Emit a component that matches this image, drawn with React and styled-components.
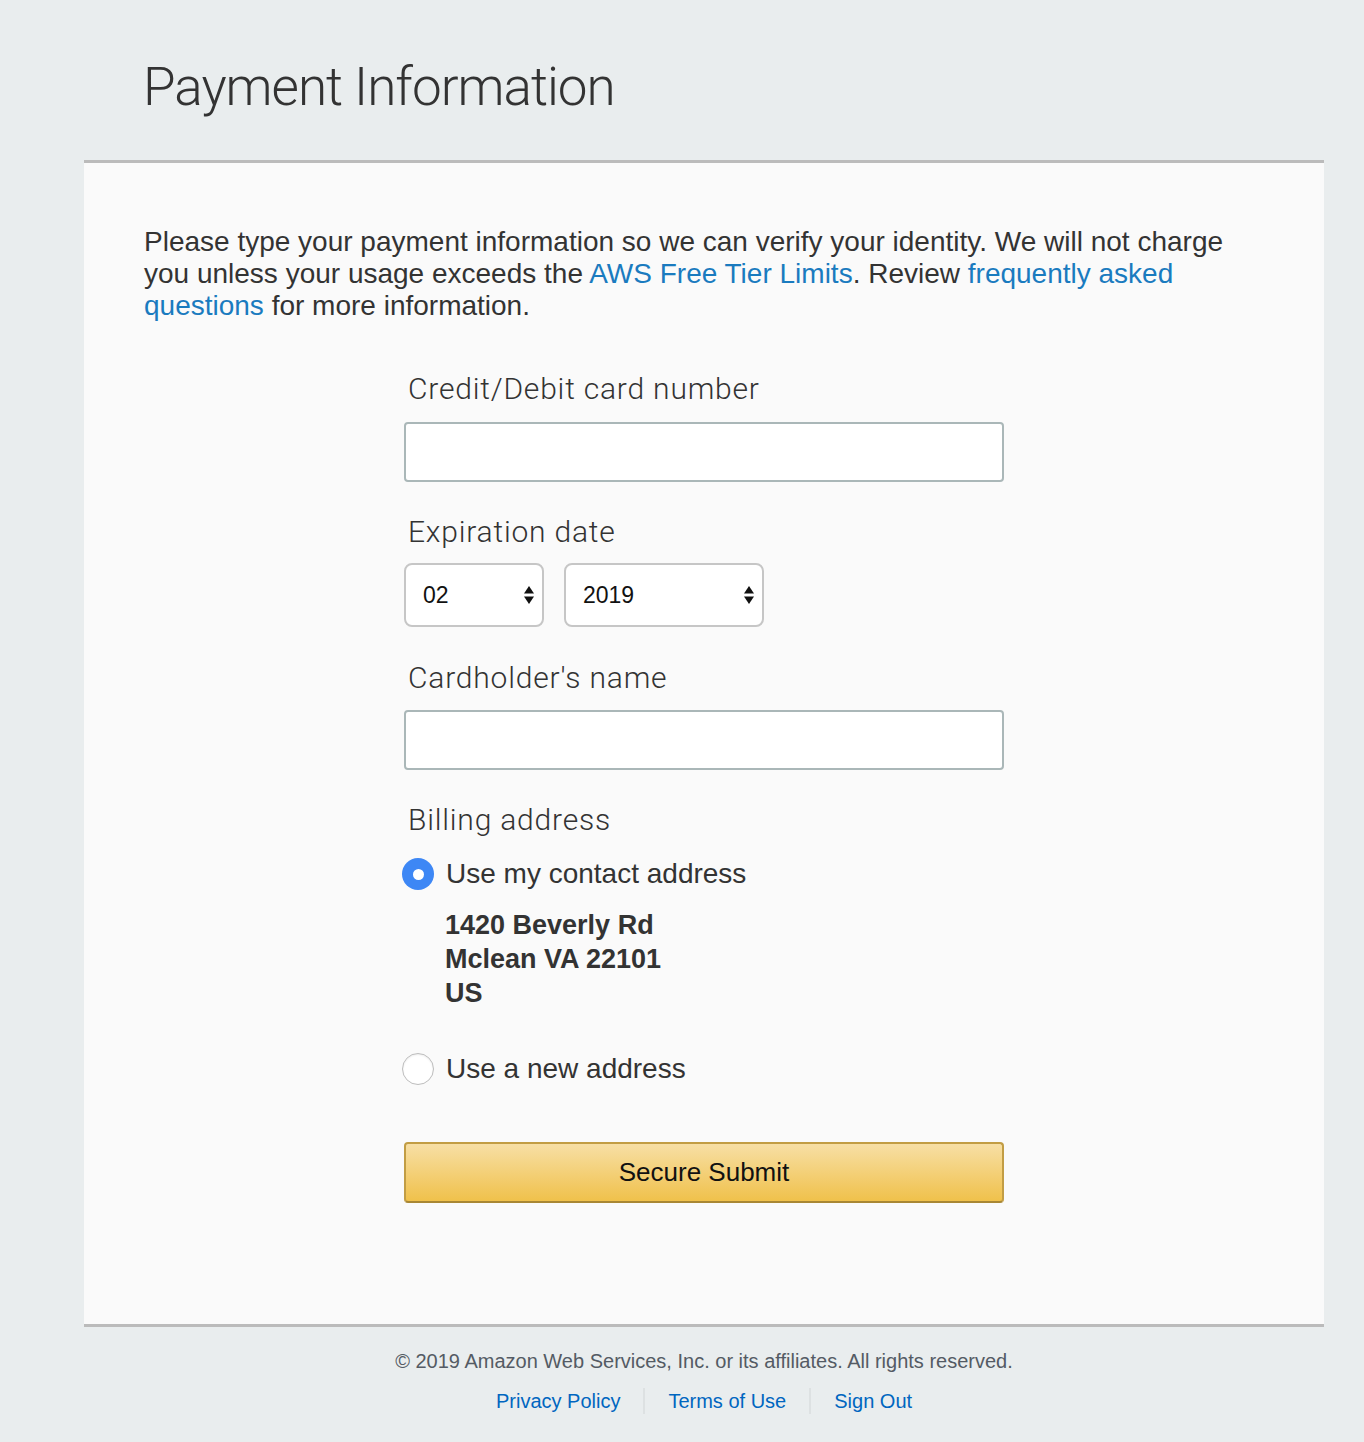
import React from 'react';
import styled, { createGlobalStyle } from 'styled-components';

const GlobalStyle = createGlobalStyle`
  html, body {
    margin: 0;
    padding: 0;
    background: #e9edee;
  }
  body {
    font-family: "Liberation Sans", Arial, sans-serif;
    color: #333;
  }
`;

const Page = styled.div`
  width: 1364px;
  min-height: 1442px;
  background: #e9edee;
`;

const Header = styled.header`
  height: 160px;
  padding-left: 143px;
  box-sizing: border-box;
  display: flex;
  align-items: center;
`;

const Title = styled.h1`
  margin: 14px 0 0 0;
  font-family: Roboto, "Liberation Sans", sans-serif;
  font-weight: 300;
  font-size: 53px;
  color: #333;
  letter-spacing: -1px;
`;

const Panel = styled.main`
  margin-left: 84px;
  width: 1240px;
  box-sizing: border-box;
  background: #fafafa;
  border-top: 3px solid #bbbbbb;
  border-bottom: 3px solid #bbbbbb;
  padding: 63px 60px 121px;
`;

const Intro = styled.p`
  margin: 0;
  font-size: 28px;
  line-height: 32px;
  color: #333;
`;

const Link = styled.a`
  color: #1a7bbf;
  text-decoration: none;
`;

const Form = styled.form`
  width: 600px;
  margin: 49px auto 0;
  display: flex;
  flex-direction: column;
`;

const Label = styled.label`
  display: block;
  font-family: Roboto, "Liberation Sans", sans-serif;
  font-weight: 300;
  font-size: 30px;
  letter-spacing: 0.8px;
  line-height: 36px;
  color: #333;
  padding-left: 4px;
  margin-bottom: ${p => p.$gap || 15}px;
`;

const TextInput = styled.input`
  display: block;
  width: 600px;
  height: 60px;
  box-sizing: border-box;
  border: 2px solid #aab7b8;
  border-radius: 4px;
  background: #fff;
  font-size: 22px;
  padding: 0 16px;
  margin-bottom: ${p => p.$after || 32}px;
`;

const SelectRow = styled.div`
  display: flex;
  gap: 20px;
  margin-bottom: 33px;
`;

const SelectBox = styled.div`
  position: relative;
  width: ${p => p.$w}px;
  height: 64px;
`;

const Select = styled.select`
  appearance: none;
  -webkit-appearance: none;
  width: 100%;
  height: 100%;
  box-sizing: border-box;
  border: 2px solid #c6c6c6;
  border-radius: 8px;
  background: #fff;
  font-family: "Liberation Sans", Arial, sans-serif;
  font-size: 23px;
  color: #111;
  padding: 0 17px;
`;

const Arrows = styled.svg`
  position: absolute;
  right: 9px;
  top: 21px;
  pointer-events: none;
`;

const RadioRow = styled.label`
  display: flex;
  align-items: center;
  gap: 12px;
  margin-left: -2px;
  font-size: 28px;
  line-height: 36px;
  color: #333;
`;

const Radio = styled.span`
  width: 32px;
  height: 32px;
  border-radius: 50%;
  box-sizing: border-box;
  flex-shrink: 0;
  display: flex;
  align-items: center;
  justify-content: center;
  background: ${p => (p.$checked ? '#3d87f5' : '#fff')};
  border: ${p => (p.$checked ? 'none' : '1.5px solid #bdbdbd')};
  box-shadow: ${p => (p.$checked ? 'none' : 'inset 0 1px 2px rgba(0,0,0,0.08)')};
  &::after {
    content: '';
    display: ${p => (p.$checked ? 'block' : 'none')};
    width: 11px;
    height: 11px;
    border-radius: 50%;
    background: #fff;
  }
`;

const Address = styled.div`
  margin: 16px 0 41px 41px;
  font-weight: 700;
  font-size: 27px;
  line-height: 34px;
  color: #333;
`;

const SubmitButton = styled.button`
  margin-top: 55px;
  width: 600px;
  height: 61px;
  border: 2px solid #c29d44;
  border-bottom-color: #a88734;
  border-radius: 4px;
  background: linear-gradient(to bottom, #f7dfa5, #f0c14b);
  font-family: "Liberation Sans", Arial, sans-serif;
  font-size: 26px;
  color: #111;
  cursor: pointer;
`;

const Footer = styled.footer`
  margin-left: 84px;
  width: 1240px;
  padding-top: 22px;
  text-align: center;
`;

const Copyright = styled.div`
  font-size: 20px;
  line-height: 24px;
  color: #545b64;
`;

const FooterLinks = styled.div`
  margin-top: 15px;
  display: flex;
  justify-content: center;
`;

const FooterLink = styled.a`
  font-size: 20px;
  line-height: 26px;
  color: #0066c0;
  text-decoration: none;
  padding: 0 23px;
  & + & {
    border-left: 2px solid #dde1e2;
  }
`;

const SelectArrows = () => (
  <Arrows width="12" height="22" viewBox="0 0 12 22">
    <path d="M6 2 L11 9.5 L1 9.5 Z" fill="#111" />
    <path d="M6 20 L11 12.5 L1 12.5 Z" fill="#111" />
  </Arrows>
);

const App = () => {
  return (
    <Page>
      <GlobalStyle />
      <Header>
        <Title>Payment Information</Title>
      </Header>
      <Panel>
        <Intro>
          Please type your payment information so we can verify your identity. We will not charge
          you unless your usage exceeds the <Link href="#">AWS Free Tier Limits</Link>. Review{' '}
          <Link href="#">frequently asked questions</Link> for more information.
        </Intro>
        <Form onSubmit={e => e.preventDefault()}>
          <Label>Credit/Debit card number</Label>
          <TextInput type="text" />

          <Label $gap={13}>Expiration date</Label>
          <SelectRow>
            <SelectBox $w={140}>
              <Select defaultValue="02">
                <option>01</option>
                <option>02</option>
                <option>03</option>
              </Select>
              <SelectArrows />
            </SelectBox>
            <SelectBox $w={200}>
              <Select defaultValue="2019">
                <option>2019</option>
                <option>2020</option>
                <option>2021</option>
              </Select>
              <SelectArrows />
            </SelectBox>
          </SelectRow>

          <Label $gap={14}>Cardholder's name</Label>
          <TextInput type="text" $after={32} />

          <Label $gap={18}>Billing address</Label>
          <RadioRow>
            <Radio $checked />
            Use my contact address
          </RadioRow>
          <Address>
            1420 Beverly Rd
            <br />
            Mclean VA 22101
            <br />
            US
          </Address>
          <RadioRow>
            <Radio />
            Use a new address
          </RadioRow>

          <SubmitButton type="submit">Secure Submit</SubmitButton>
        </Form>
      </Panel>
      <Footer>
        <Copyright>© 2019 Amazon Web Services, Inc. or its affiliates. All rights reserved.</Copyright>
        <FooterLinks>
          <FooterLink href="#">Privacy Policy</FooterLink>
          <FooterLink href="#">Terms of Use</FooterLink>
          <FooterLink href="#">Sign Out</FooterLink>
        </FooterLinks>
      </Footer>
    </Page>
  );
};

export default App;
